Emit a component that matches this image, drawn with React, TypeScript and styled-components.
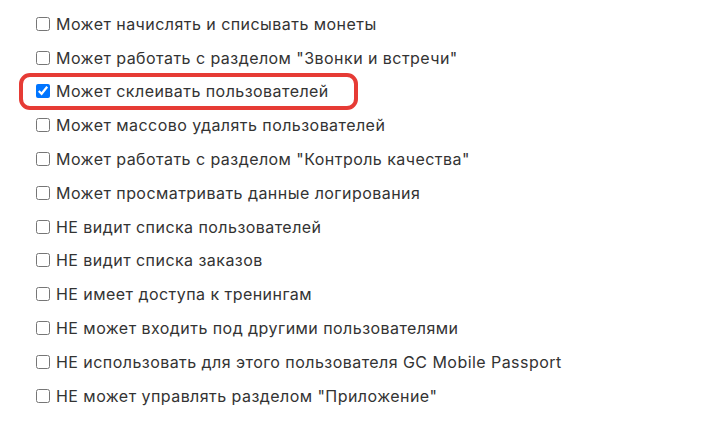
import React, { useState } from 'react';
import styled, { createGlobalStyle } from 'styled-components';

const GlobalStyle = createGlobalStyle`
  html, body {
    margin: 0;
    padding: 0;
    background: #fff;
  }
  body {
    font-family: Inter, Roboto, 'Noto Sans', sans-serif;
    color: #333;
  }
`;

const List = styled.div`
  display: flex;
  flex-direction: column;
  padding: 7px 0 0 36px;
`;

const Row = styled.label<{ $marked?: boolean }>`
  display: flex;
  align-items: center;
  align-self: flex-start;
  height: 33.8px;
  font-size: 16px;
  letter-spacing: 0.45px;
  color: #333;
  cursor: pointer;
  border-radius: 9px;
  ${(p) =>
    p.$marked &&
    `
    margin-left: -15px;
    padding: 0 27px 0 15px;
    outline: 4px solid #e63b35;
    outline-offset: -2px;
  `}

  input {
    width: 14px;
    height: 14px;
    margin: 0 6px 0 0;
    flex: none;
  }
`;

const items = [
  'Может начислять и списывать монеты',
  'Может работать с разделом "Звонки и встречи"',
  'Может склеивать пользователей',
  'Может массово удалять пользователей',
  'Может работать с разделом "Контроль качества"',
  'Может просматривать данные логирования',
  'НЕ видит списка пользователей',
  'НЕ видит списка заказов',
  'НЕ имеет доступа к тренингам',
  'НЕ может входить под другими пользователями',
  'НЕ использовать для этого пользователя GC Mobile Passport',
  'НЕ может управлять разделом "Приложение"',
];

const App: React.FC = () => {
  const [checked, setChecked] = useState<boolean[]>(items.map((_, i) => i === 2));
  return (
    <>
      <GlobalStyle />
      <List>
        {items.map((text, i) => (
          <Row key={i} $marked={i === 2}>
            <input
              type="checkbox"
              checked={checked[i]}
              onChange={() => setChecked(checked.map((c, j) => (j === i ? !c : c)))}
            />
            {text}
          </Row>
        ))}
      </List>
    </>
  );
};

export default App;
